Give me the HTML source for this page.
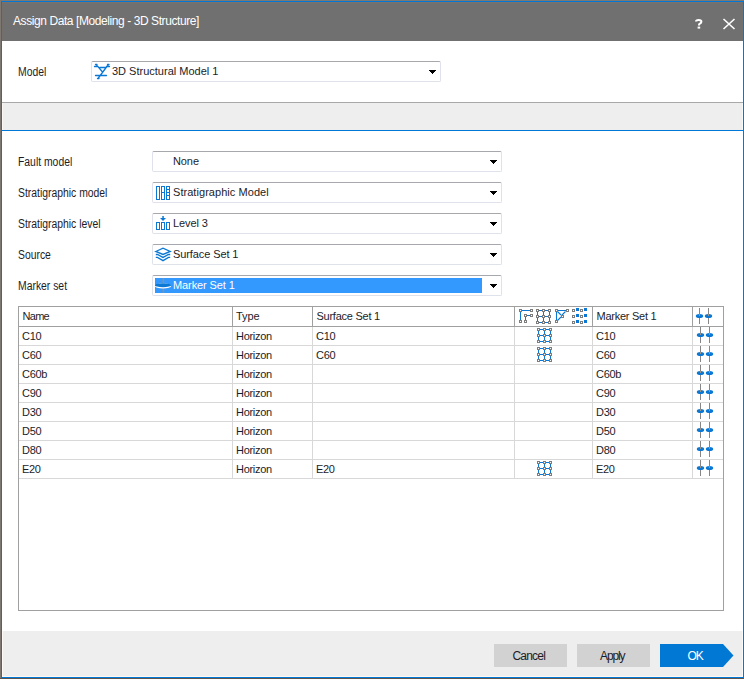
<!DOCTYPE html>
<html><head><meta charset="utf-8">
<style>
*{margin:0;padding:0;box-sizing:border-box}
html,body{width:744px;height:679px;overflow:hidden;background:#7e7873;font-family:"Liberation Sans",sans-serif;color:#1c1c28}
.a{position:absolute}
#win{position:absolute;left:1px;top:1px;width:743px;height:677px;border:1px solid #0078d7;background:#fff}
#title{left:1px;top:1px;width:741px;height:39px;background:#707070}
.t{position:absolute;white-space:nowrap;font-size:11px;line-height:13px}
.combo{position:absolute;height:21px;border:1px solid #dfe2ea;border-top-color:#a6a8ad;border-radius:2px;background:#fff}
.arr{position:absolute;width:0;height:0;border-left:4px solid transparent;border-right:4px solid transparent;border-top:4px solid #000}
.hl{position:absolute;height:1px}
.vl{position:absolute;width:1px}
.btn{position:absolute;top:644px;height:23px;background:#d2d2d2}
.lb{font-size:12px;transform-origin:0 0;transform:scaleX(0.865)}
.cb{letter-spacing:-0.1px}
.tb{letter-spacing:-0.3px}
</style></head><body>
<div id="win"></div>
<!-- title bar -->
<div class="a" style="left:2px;top:2px;width:741px;height:39px;background:#707070"></div>
<div class="t" style="left:13px;top:15px;color:#fff;font-size:12px;letter-spacing:-0.42px">Assign Data [Modeling - 3D Structure]</div>
<svg class="a" style="left:694px;top:18px" width="10" height="12" viewBox="0 0 10 12"><path d="M2 3.6 Q2 1.9 4.6 1.9 Q7.4 1.9 7.4 3.7 Q7.4 5.0 5.6 5.8 Q5 6.2 5 7 V7.6" stroke="#fff" stroke-width="2" fill="none"/><rect x="3.6" y="8.6" width="2.6" height="2" fill="#fff"/></svg>
<svg class="a" style="left:722px;top:18px" width="14" height="12" viewBox="0 0 14 12"><path d="M1.5 1 L12.5 11 M12.5 1 L1.5 11" stroke="#fff" stroke-width="1.6" fill="none"/></svg>

<!-- model row -->
<div class="t lb" style="left:18px;top:66px">Model</div>
<div class="combo" style="left:91px;top:61px;width:350px"></div>
<svg class="a" style="left:92px;top:61px" width="20" height="20"><g stroke="#0a78d4" stroke-width="1.3" fill="none" stroke-linecap="round"><path d="M2.5 5.5H6M3.5 3.5H5M4.5 3.8L10.5 11M14.5 5.5H17.5M15.5 3.5H17M16 4L6 17.5M7.8 6.5H13.5M3.5 14.5H14.5M5.5 17.5H7"/></g></svg>
<div class="t cb" style="left:112px;top:65px;letter-spacing:0px">3D Structural Model 1</div>
<svg class="a" style="left:429px;top:70px" width="7" height="4"><g shape-rendering="crispEdges"><rect x="0" y="0" width="7" height="1"/><rect x="1" y="1" width="5" height="1"/><rect x="2" y="2" width="3" height="1"/><rect x="3" y="3" width="1" height="1"/></g></svg>

<!-- band -->
<div class="hl" style="left:2px;top:102px;width:741px;background:#a8a8a8"></div>
<div class="a" style="left:2px;top:103px;width:741px;height:27px;background:#eeeeee"></div>
<div class="hl" style="left:2px;top:130px;width:741px;background:#0078d7"></div>

<!-- form -->
<div class="t lb" style="left:18px;top:156px">Fault model</div>
<div class="t lb" style="left:18px;top:187px">Stratigraphic model</div>
<div class="t lb" style="left:18px;top:218px">Stratigraphic level</div>
<div class="t lb" style="left:18px;top:249px">Source</div>
<div class="t lb" style="left:18px;top:280px">Marker set</div>

<div class="combo" style="left:152px;top:151px;width:350px"></div>
<div class="combo" style="left:152px;top:182px;width:350px"></div>
<div class="combo" style="left:152px;top:213px;width:350px"></div>
<div class="combo" style="left:152px;top:244px;width:350px"></div>
<div class="combo" style="left:152px;top:275px;width:350px"></div>
<svg class="a" style="left:490px;top:160px" width="7" height="4"><g shape-rendering="crispEdges"><rect x="0" y="0" width="7" height="1"/><rect x="1" y="1" width="5" height="1"/><rect x="2" y="2" width="3" height="1"/><rect x="3" y="3" width="1" height="1"/></g></svg>
<svg class="a" style="left:490px;top:191px" width="7" height="4"><g shape-rendering="crispEdges"><rect x="0" y="0" width="7" height="1"/><rect x="1" y="1" width="5" height="1"/><rect x="2" y="2" width="3" height="1"/><rect x="3" y="3" width="1" height="1"/></g></svg>
<svg class="a" style="left:490px;top:222px" width="7" height="4"><g shape-rendering="crispEdges"><rect x="0" y="0" width="7" height="1"/><rect x="1" y="1" width="5" height="1"/><rect x="2" y="2" width="3" height="1"/><rect x="3" y="3" width="1" height="1"/></g></svg>
<svg class="a" style="left:490px;top:253px" width="7" height="4"><g shape-rendering="crispEdges"><rect x="0" y="0" width="7" height="1"/><rect x="1" y="1" width="5" height="1"/><rect x="2" y="2" width="3" height="1"/><rect x="3" y="3" width="1" height="1"/></g></svg>
<svg class="a" style="left:490px;top:284px" width="7" height="4"><g shape-rendering="crispEdges"><rect x="0" y="0" width="7" height="1"/><rect x="1" y="1" width="5" height="1"/><rect x="2" y="2" width="3" height="1"/><rect x="3" y="3" width="1" height="1"/></g></svg>

<div class="t cb" style="left:173px;top:155px">None</div>
<svg class="a" style="left:153px;top:181px" width="20" height="20" shape-rendering="crispEdges"><g fill="none" stroke="#0a78d4" stroke-width="1"><rect x="3.5" y="5.5" width="3" height="13"/><rect x="8.5" y="5.5" width="3" height="13"/><rect x="13.5" y="5.5" width="3" height="13"/><path d="M8 11.5H12M13 8.5H17M13 11.5H17M13 14.5H17"/></g></svg>
<div class="t cb" style="left:173px;top:186px;letter-spacing:0.05px">Stratigraphic Model</div>
<svg class="a" style="left:153px;top:212px" width="20" height="20"><g fill="none" stroke="#0a78d4" stroke-width="1" shape-rendering="crispEdges"><rect x="3.5" y="10.5" width="3" height="7"/><rect x="8.5" y="10.5" width="3" height="7"/><rect x="13.5" y="10.5" width="3" height="7"/></g><rect x="9.3" y="4" width="1.5" height="3" fill="#0a78d4"/><path d="M7 6H13L10 9Z" fill="#0a78d4"/></svg>
<div class="t cb" style="left:173px;top:217px">Level 3</div>
<svg class="a" style="left:153px;top:243px" width="20" height="20"><g fill="none" stroke="#0a78d4" stroke-width="1.35"><path d="M2.8 8.5L10 5.2L17.2 8.5L10 11.4Z"/><path d="M2.8 11.5H4.5L10 14.4L15.5 11.5H17.2"/><path d="M2.8 14.4H4.5L10 17.6L15.5 14.4H17.2"/></g></svg>
<div class="t cb" style="left:173px;top:248px">Surface Set 1</div>
<div class="a" style="left:155px;top:278px;width:327px;height:15px;background:#3399ff"></div>
<svg class="a" style="left:155px;top:278px" width="17" height="15"><rect x="7.6" y="0" width="1.5" height="15" fill="#8f8f8f"/><ellipse cx="8" cy="7.9" rx="8.2" ry="2.6" fill="#fff"/><ellipse cx="8" cy="7.2" rx="8.2" ry="2" fill="#0a78d4"/></svg>
<div class="t cb" style="left:173px;top:279px;color:#fff">Marker Set 1</div>

<!-- table -->
<div class="a" style="left:18px;top:306px;width:706px;height:305px;border:1px solid #a0a0a0;background:#fff"></div>
<div class="hl" style="left:19px;top:326px;width:704px;background:#a0a0a0"></div>
<div class="vl" style="left:232px;top:307px;height:19px;background:#a0a0a0"></div>
<div class="vl" style="left:232px;top:327px;height:152px;background:#d8d8d8"></div>
<div class="vl" style="left:312px;top:307px;height:19px;background:#a0a0a0"></div>
<div class="vl" style="left:312px;top:327px;height:152px;background:#d8d8d8"></div>
<div class="vl" style="left:514px;top:307px;height:19px;background:#a0a0a0"></div>
<div class="vl" style="left:514px;top:327px;height:152px;background:#d8d8d8"></div>
<div class="vl" style="left:592px;top:307px;height:19px;background:#a0a0a0"></div>
<div class="vl" style="left:592px;top:327px;height:152px;background:#d8d8d8"></div>
<div class="vl" style="left:692px;top:307px;height:19px;background:#a0a0a0"></div>
<div class="vl" style="left:692px;top:327px;height:152px;background:#d8d8d8"></div>
<div class="hl" style="left:19px;top:345px;width:704px;background:#d8d8d8"></div>
<div class="hl" style="left:19px;top:364px;width:704px;background:#d8d8d8"></div>
<div class="hl" style="left:19px;top:383px;width:704px;background:#d8d8d8"></div>
<div class="hl" style="left:19px;top:402px;width:704px;background:#d8d8d8"></div>
<div class="hl" style="left:19px;top:421px;width:704px;background:#d8d8d8"></div>
<div class="hl" style="left:19px;top:440px;width:704px;background:#d8d8d8"></div>
<div class="hl" style="left:19px;top:459px;width:704px;background:#d8d8d8"></div>
<div class="hl" style="left:19px;top:478px;width:704px;background:#d8d8d8"></div>
<div class="t tb" style="left:22.5px;top:310px;letter-spacing:-0.7px">Name</div>
<div class="t tb" style="left:236px;top:310px;letter-spacing:-0.1px">Type</div>
<div class="t tb" style="left:316.5px;top:310px;letter-spacing:-0.25px">Surface Set 1</div>
<div class="t tb" style="left:596.5px;top:310px;letter-spacing:-0.25px">Marker Set 1</div>
<div class="t tb" style="left:22px;top:330px">C10</div>
<div class="t tb" style="left:236px;top:330px">Horizon</div>
<div class="t tb" style="left:316px;top:330px">C10</div>
<div class="t tb" style="left:596px;top:330px">C10</div>
<svg class="a" style="left:537px;top:328px" width="15" height="15"><g shape-rendering="crispEdges">
<g fill="#0a78d4"><rect x="3" y="1" width="3" height="1"/><rect x="9" y="1" width="3" height="1"/><rect x="3" y="7" width="3" height="1"/><rect x="9" y="7" width="3" height="1"/><rect x="3" y="13" width="3" height="1"/><rect x="9" y="13" width="3" height="1"/>
<rect x="1" y="3" width="1" height="3"/><rect x="1" y="9" width="1" height="3"/><rect x="7" y="3" width="1" height="3"/><rect x="7" y="9" width="1" height="3"/><rect x="13" y="3" width="1" height="3"/><rect x="13" y="9" width="1" height="3"/></g>
<g transform="translate(0,0)"><rect x="0.5" y="0.5" width="2" height="2" fill="#fff" stroke="#7d7d7d" stroke-width="1"/></g><g transform="translate(6,0)"><rect x="0.5" y="0.5" width="2" height="2" fill="#fff" stroke="#7d7d7d" stroke-width="1"/></g><g transform="translate(12,0)"><rect x="0.5" y="0.5" width="2" height="2" fill="#fff" stroke="#7d7d7d" stroke-width="1"/></g>
<g transform="translate(0,6)"><rect x="0.5" y="0.5" width="2" height="2" fill="#fff" stroke="#7d7d7d" stroke-width="1"/></g><g transform="translate(6,6)"><rect x="0.5" y="0.5" width="2" height="2" fill="#fff" stroke="#7d7d7d" stroke-width="1"/></g><g transform="translate(12,6)"><rect x="0.5" y="0.5" width="2" height="2" fill="#fff" stroke="#7d7d7d" stroke-width="1"/></g>
<g transform="translate(0,12)"><rect x="0.5" y="0.5" width="2" height="2" fill="#fff" stroke="#7d7d7d" stroke-width="1"/></g><g transform="translate(6,12)"><rect x="0.5" y="0.5" width="2" height="2" fill="#fff" stroke="#7d7d7d" stroke-width="1"/></g><g transform="translate(12,12)"><rect x="0.5" y="0.5" width="2" height="2" fill="#fff" stroke="#7d7d7d" stroke-width="1"/></g>
</g></svg>
<svg class="a" style="left:696px;top:327px" width="18" height="18">
<rect x="4" y="0" width="1" height="16" fill="#868686" shape-rendering="crispEdges"/><rect x="13" y="0" width="1" height="16" fill="#868686" shape-rendering="crispEdges"/>
<ellipse cx="4.5" cy="8" rx="3.7" ry="2.1" fill="#0a78d4"/><ellipse cx="13.5" cy="8" rx="3.7" ry="2.1" fill="#0a78d4"/>
<rect x="4" y="6" width="1" height="2" fill="#a09080" shape-rendering="crispEdges"/><rect x="13" y="6" width="1" height="2" fill="#a09080" shape-rendering="crispEdges"/>
</svg>
<div class="t tb" style="left:22px;top:349px">C60</div>
<div class="t tb" style="left:236px;top:349px">Horizon</div>
<div class="t tb" style="left:316px;top:349px">C60</div>
<div class="t tb" style="left:596px;top:349px">C60</div>
<svg class="a" style="left:537px;top:347px" width="15" height="15"><g shape-rendering="crispEdges">
<g fill="#0a78d4"><rect x="3" y="1" width="3" height="1"/><rect x="9" y="1" width="3" height="1"/><rect x="3" y="7" width="3" height="1"/><rect x="9" y="7" width="3" height="1"/><rect x="3" y="13" width="3" height="1"/><rect x="9" y="13" width="3" height="1"/>
<rect x="1" y="3" width="1" height="3"/><rect x="1" y="9" width="1" height="3"/><rect x="7" y="3" width="1" height="3"/><rect x="7" y="9" width="1" height="3"/><rect x="13" y="3" width="1" height="3"/><rect x="13" y="9" width="1" height="3"/></g>
<g transform="translate(0,0)"><rect x="0.5" y="0.5" width="2" height="2" fill="#fff" stroke="#7d7d7d" stroke-width="1"/></g><g transform="translate(6,0)"><rect x="0.5" y="0.5" width="2" height="2" fill="#fff" stroke="#7d7d7d" stroke-width="1"/></g><g transform="translate(12,0)"><rect x="0.5" y="0.5" width="2" height="2" fill="#fff" stroke="#7d7d7d" stroke-width="1"/></g>
<g transform="translate(0,6)"><rect x="0.5" y="0.5" width="2" height="2" fill="#fff" stroke="#7d7d7d" stroke-width="1"/></g><g transform="translate(6,6)"><rect x="0.5" y="0.5" width="2" height="2" fill="#fff" stroke="#7d7d7d" stroke-width="1"/></g><g transform="translate(12,6)"><rect x="0.5" y="0.5" width="2" height="2" fill="#fff" stroke="#7d7d7d" stroke-width="1"/></g>
<g transform="translate(0,12)"><rect x="0.5" y="0.5" width="2" height="2" fill="#fff" stroke="#7d7d7d" stroke-width="1"/></g><g transform="translate(6,12)"><rect x="0.5" y="0.5" width="2" height="2" fill="#fff" stroke="#7d7d7d" stroke-width="1"/></g><g transform="translate(12,12)"><rect x="0.5" y="0.5" width="2" height="2" fill="#fff" stroke="#7d7d7d" stroke-width="1"/></g>
</g></svg>
<svg class="a" style="left:696px;top:346px" width="18" height="18">
<rect x="4" y="0" width="1" height="16" fill="#868686" shape-rendering="crispEdges"/><rect x="13" y="0" width="1" height="16" fill="#868686" shape-rendering="crispEdges"/>
<ellipse cx="4.5" cy="8" rx="3.7" ry="2.1" fill="#0a78d4"/><ellipse cx="13.5" cy="8" rx="3.7" ry="2.1" fill="#0a78d4"/>
<rect x="4" y="6" width="1" height="2" fill="#a09080" shape-rendering="crispEdges"/><rect x="13" y="6" width="1" height="2" fill="#a09080" shape-rendering="crispEdges"/>
</svg>
<div class="t tb" style="left:22px;top:368px">C60b</div>
<div class="t tb" style="left:236px;top:368px">Horizon</div>
<div class="t tb" style="left:596px;top:368px">C60b</div>
<svg class="a" style="left:696px;top:365px" width="18" height="18">
<rect x="4" y="0" width="1" height="16" fill="#868686" shape-rendering="crispEdges"/><rect x="13" y="0" width="1" height="16" fill="#868686" shape-rendering="crispEdges"/>
<ellipse cx="4.5" cy="8" rx="3.7" ry="2.1" fill="#0a78d4"/><ellipse cx="13.5" cy="8" rx="3.7" ry="2.1" fill="#0a78d4"/>
<rect x="4" y="6" width="1" height="2" fill="#a09080" shape-rendering="crispEdges"/><rect x="13" y="6" width="1" height="2" fill="#a09080" shape-rendering="crispEdges"/>
</svg>
<div class="t tb" style="left:22px;top:387px">C90</div>
<div class="t tb" style="left:236px;top:387px">Horizon</div>
<div class="t tb" style="left:596px;top:387px">C90</div>
<svg class="a" style="left:696px;top:384px" width="18" height="18">
<rect x="4" y="0" width="1" height="16" fill="#868686" shape-rendering="crispEdges"/><rect x="13" y="0" width="1" height="16" fill="#868686" shape-rendering="crispEdges"/>
<ellipse cx="4.5" cy="8" rx="3.7" ry="2.1" fill="#0a78d4"/><ellipse cx="13.5" cy="8" rx="3.7" ry="2.1" fill="#0a78d4"/>
<rect x="4" y="6" width="1" height="2" fill="#a09080" shape-rendering="crispEdges"/><rect x="13" y="6" width="1" height="2" fill="#a09080" shape-rendering="crispEdges"/>
</svg>
<div class="t tb" style="left:22px;top:406px">D30</div>
<div class="t tb" style="left:236px;top:406px">Horizon</div>
<div class="t tb" style="left:596px;top:406px">D30</div>
<svg class="a" style="left:696px;top:403px" width="18" height="18">
<rect x="4" y="0" width="1" height="16" fill="#868686" shape-rendering="crispEdges"/><rect x="13" y="0" width="1" height="16" fill="#868686" shape-rendering="crispEdges"/>
<ellipse cx="4.5" cy="8" rx="3.7" ry="2.1" fill="#0a78d4"/><ellipse cx="13.5" cy="8" rx="3.7" ry="2.1" fill="#0a78d4"/>
<rect x="4" y="6" width="1" height="2" fill="#a09080" shape-rendering="crispEdges"/><rect x="13" y="6" width="1" height="2" fill="#a09080" shape-rendering="crispEdges"/>
</svg>
<div class="t tb" style="left:22px;top:425px">D50</div>
<div class="t tb" style="left:236px;top:425px">Horizon</div>
<div class="t tb" style="left:596px;top:425px">D50</div>
<svg class="a" style="left:696px;top:422px" width="18" height="18">
<rect x="4" y="0" width="1" height="16" fill="#868686" shape-rendering="crispEdges"/><rect x="13" y="0" width="1" height="16" fill="#868686" shape-rendering="crispEdges"/>
<ellipse cx="4.5" cy="8" rx="3.7" ry="2.1" fill="#0a78d4"/><ellipse cx="13.5" cy="8" rx="3.7" ry="2.1" fill="#0a78d4"/>
<rect x="4" y="6" width="1" height="2" fill="#a09080" shape-rendering="crispEdges"/><rect x="13" y="6" width="1" height="2" fill="#a09080" shape-rendering="crispEdges"/>
</svg>
<div class="t tb" style="left:22px;top:444px">D80</div>
<div class="t tb" style="left:236px;top:444px">Horizon</div>
<div class="t tb" style="left:596px;top:444px">D80</div>
<svg class="a" style="left:696px;top:441px" width="18" height="18">
<rect x="4" y="0" width="1" height="16" fill="#868686" shape-rendering="crispEdges"/><rect x="13" y="0" width="1" height="16" fill="#868686" shape-rendering="crispEdges"/>
<ellipse cx="4.5" cy="8" rx="3.7" ry="2.1" fill="#0a78d4"/><ellipse cx="13.5" cy="8" rx="3.7" ry="2.1" fill="#0a78d4"/>
<rect x="4" y="6" width="1" height="2" fill="#a09080" shape-rendering="crispEdges"/><rect x="13" y="6" width="1" height="2" fill="#a09080" shape-rendering="crispEdges"/>
</svg>
<div class="t tb" style="left:22px;top:463px">E20</div>
<div class="t tb" style="left:236px;top:463px">Horizon</div>
<div class="t tb" style="left:316px;top:463px">E20</div>
<div class="t tb" style="left:596px;top:463px">E20</div>
<svg class="a" style="left:537px;top:461px" width="15" height="15"><g shape-rendering="crispEdges">
<g fill="#0a78d4"><rect x="3" y="1" width="3" height="1"/><rect x="9" y="1" width="3" height="1"/><rect x="3" y="7" width="3" height="1"/><rect x="9" y="7" width="3" height="1"/><rect x="3" y="13" width="3" height="1"/><rect x="9" y="13" width="3" height="1"/>
<rect x="1" y="3" width="1" height="3"/><rect x="1" y="9" width="1" height="3"/><rect x="7" y="3" width="1" height="3"/><rect x="7" y="9" width="1" height="3"/><rect x="13" y="3" width="1" height="3"/><rect x="13" y="9" width="1" height="3"/></g>
<g transform="translate(0,0)"><rect x="0.5" y="0.5" width="2" height="2" fill="#fff" stroke="#7d7d7d" stroke-width="1"/></g><g transform="translate(6,0)"><rect x="0.5" y="0.5" width="2" height="2" fill="#fff" stroke="#7d7d7d" stroke-width="1"/></g><g transform="translate(12,0)"><rect x="0.5" y="0.5" width="2" height="2" fill="#fff" stroke="#7d7d7d" stroke-width="1"/></g>
<g transform="translate(0,6)"><rect x="0.5" y="0.5" width="2" height="2" fill="#fff" stroke="#7d7d7d" stroke-width="1"/></g><g transform="translate(6,6)"><rect x="0.5" y="0.5" width="2" height="2" fill="#fff" stroke="#7d7d7d" stroke-width="1"/></g><g transform="translate(12,6)"><rect x="0.5" y="0.5" width="2" height="2" fill="#fff" stroke="#7d7d7d" stroke-width="1"/></g>
<g transform="translate(0,12)"><rect x="0.5" y="0.5" width="2" height="2" fill="#fff" stroke="#7d7d7d" stroke-width="1"/></g><g transform="translate(6,12)"><rect x="0.5" y="0.5" width="2" height="2" fill="#fff" stroke="#7d7d7d" stroke-width="1"/></g><g transform="translate(12,12)"><rect x="0.5" y="0.5" width="2" height="2" fill="#fff" stroke="#7d7d7d" stroke-width="1"/></g>
</g></svg>
<svg class="a" style="left:696px;top:460px" width="18" height="18">
<rect x="4" y="0" width="1" height="16" fill="#868686" shape-rendering="crispEdges"/><rect x="13" y="0" width="1" height="16" fill="#868686" shape-rendering="crispEdges"/>
<ellipse cx="4.5" cy="8" rx="3.7" ry="2.1" fill="#0a78d4"/><ellipse cx="13.5" cy="8" rx="3.7" ry="2.1" fill="#0a78d4"/>
<rect x="4" y="6" width="1" height="2" fill="#a09080" shape-rendering="crispEdges"/><rect x="13" y="6" width="1" height="2" fill="#a09080" shape-rendering="crispEdges"/>
</svg>
<svg class="a" style="left:519px;top:309px" width="15" height="15" shape-rendering="crispEdges"><g fill="#0a78d4"><rect x="3" y="1" width="8" height="1"/><rect x="1" y="3" width="1" height="8"/><rect x="8" y="6" width="3" height="1"/><rect x="6" y="8" width="1" height="3"/></g><g transform="translate(0,0)"><rect x="0.5" y="0.5" width="2" height="2" fill="#fff" stroke="#7d7d7d" stroke-width="1"/></g><g transform="translate(11,0)"><rect x="0.5" y="0.5" width="2" height="2" fill="#fff" stroke="#7d7d7d" stroke-width="1"/></g><g transform="translate(5,5)"><rect x="0.5" y="0.5" width="2" height="2" fill="#fff" stroke="#7d7d7d" stroke-width="1"/></g><g transform="translate(11,5)"><rect x="0.5" y="0.5" width="2" height="2" fill="#fff" stroke="#7d7d7d" stroke-width="1"/></g><g transform="translate(0,11)"><rect x="0.5" y="0.5" width="2" height="2" fill="#fff" stroke="#7d7d7d" stroke-width="1"/></g><g transform="translate(5,11)"><rect x="0.5" y="0.5" width="2" height="2" fill="#fff" stroke="#7d7d7d" stroke-width="1"/></g></svg>
<svg class="a" style="left:536px;top:309px" width="15" height="15"><g shape-rendering="crispEdges">
<g fill="#0a78d4"><rect x="3" y="1" width="3" height="1"/><rect x="9" y="1" width="3" height="1"/><rect x="3" y="7" width="3" height="1"/><rect x="9" y="7" width="3" height="1"/><rect x="3" y="13" width="3" height="1"/><rect x="9" y="13" width="3" height="1"/>
<rect x="1" y="3" width="1" height="3"/><rect x="1" y="9" width="1" height="3"/><rect x="7" y="3" width="1" height="3"/><rect x="7" y="9" width="1" height="3"/><rect x="13" y="3" width="1" height="3"/><rect x="13" y="9" width="1" height="3"/></g>
<g transform="translate(0,0)"><rect x="0.5" y="0.5" width="2" height="2" fill="#fff" stroke="#7d7d7d" stroke-width="1"/></g><g transform="translate(6,0)"><rect x="0.5" y="0.5" width="2" height="2" fill="#fff" stroke="#7d7d7d" stroke-width="1"/></g><g transform="translate(12,0)"><rect x="0.5" y="0.5" width="2" height="2" fill="#fff" stroke="#7d7d7d" stroke-width="1"/></g>
<g transform="translate(0,6)"><rect x="0.5" y="0.5" width="2" height="2" fill="#fff" stroke="#7d7d7d" stroke-width="1"/></g><g transform="translate(6,6)"><rect x="0.5" y="0.5" width="2" height="2" fill="#fff" stroke="#7d7d7d" stroke-width="1"/></g><g transform="translate(12,6)"><rect x="0.5" y="0.5" width="2" height="2" fill="#fff" stroke="#7d7d7d" stroke-width="1"/></g>
<g transform="translate(0,12)"><rect x="0.5" y="0.5" width="2" height="2" fill="#fff" stroke="#7d7d7d" stroke-width="1"/></g><g transform="translate(6,12)"><rect x="0.5" y="0.5" width="2" height="2" fill="#fff" stroke="#7d7d7d" stroke-width="1"/></g><g transform="translate(12,12)"><rect x="0.5" y="0.5" width="2" height="2" fill="#fff" stroke="#7d7d7d" stroke-width="1"/></g>
</g></svg>
<svg class="a" style="left:555px;top:309px" width="15" height="15"><g stroke="#0a78d4" stroke-width="1.1" fill="none"><path d="M3 1.5H11M1.5 3V11M2.5 2.5L6 6M10.5 2.5L7 6M2.5 11.5L6 8"/></g><g shape-rendering="crispEdges"><g transform="translate(0,0)"><rect x="0.5" y="0.5" width="2" height="2" fill="#fff" stroke="#7d7d7d" stroke-width="1"/></g><g transform="translate(11,0)"><rect x="0.5" y="0.5" width="2" height="2" fill="#fff" stroke="#7d7d7d" stroke-width="1"/></g><g transform="translate(6,6)"><rect x="0.5" y="0.5" width="2" height="2" fill="#fff" stroke="#7d7d7d" stroke-width="1"/></g><g transform="translate(0,11)"><rect x="0.5" y="0.5" width="2" height="2" fill="#fff" stroke="#7d7d7d" stroke-width="1"/></g></g></svg>
<svg class="a" style="left:572px;top:308px" width="15" height="16" shape-rendering="crispEdges"><g fill="#0a78d4"><rect x="4" y="0" width="3" height="3"/><rect x="12" y="0" width="3" height="3"/><rect x="4" y="6" width="3" height="3"/><rect x="12" y="6" width="3" height="3"/><rect x="4" y="12" width="3" height="3"/><rect x="12" y="12" width="3" height="3"/></g><g transform="translate(0,1)"><rect x="0.5" y="0.5" width="2" height="2" fill="#fff" stroke="#7d7d7d" stroke-width="1"/></g><g transform="translate(8,1)"><rect x="0.5" y="0.5" width="2" height="2" fill="#fff" stroke="#7d7d7d" stroke-width="1"/></g><g transform="translate(0,7)"><rect x="0.5" y="0.5" width="2" height="2" fill="#fff" stroke="#7d7d7d" stroke-width="1"/></g><g transform="translate(8,7)"><rect x="0.5" y="0.5" width="2" height="2" fill="#fff" stroke="#7d7d7d" stroke-width="1"/></g><g transform="translate(0,13)"><rect x="0.5" y="0.5" width="2" height="2" fill="#fff" stroke="#7d7d7d" stroke-width="1"/></g><g transform="translate(8,13)"><rect x="0.5" y="0.5" width="2" height="2" fill="#fff" stroke="#7d7d7d" stroke-width="1"/></g></svg>
<svg class="a" style="left:695px;top:308px" width="18" height="18">
<rect x="4" y="0" width="1" height="16" fill="#868686" shape-rendering="crispEdges"/><rect x="13" y="0" width="1" height="16" fill="#868686" shape-rendering="crispEdges"/>
<ellipse cx="4.5" cy="8" rx="3.7" ry="2.1" fill="#0a78d4"/><ellipse cx="13.5" cy="8" rx="3.7" ry="2.1" fill="#0a78d4"/>
<rect x="4" y="6" width="1" height="2" fill="#a09080" shape-rendering="crispEdges"/><rect x="13" y="6" width="1" height="2" fill="#a09080" shape-rendering="crispEdges"/>
</svg>

<!-- footer -->
<div class="a" style="left:2px;top:631px;width:741px;height:46px;background:#eeeeee"></div>
<div class="btn" style="left:494px;width:73px"></div>
<div class="btn" style="left:577px;width:73px"></div>
<svg class="a" style="left:660px;top:644px" width="74" height="23" viewBox="0 0 74 23"><path d="M0 0 H63 L73.5 11.5 L63 23 H0 Z" fill="#0078d4"/></svg>
<div class="t" style="left:512.5px;top:650px;font-size:12px;letter-spacing:-0.8px">Cancel</div>
<div class="t" style="left:600px;top:650px;font-size:12px;letter-spacing:-1.1px">Apply</div>
<div class="t" style="left:687.5px;top:650px;font-size:12px;color:#fff;letter-spacing:-1px">OK</div>
<!-- inner edges -->
<div class="a" style="left:2px;top:2px;width:741px;height:1px;background:#7a736d"></div>
<div class="vl" style="left:2px;top:3px;height:38px;background:#75706c"></div>
<div class="vl" style="left:742px;top:3px;height:38px;background:#75706c"></div>
<div class="vl" style="left:2px;top:103px;height:27px;background:#fbf7f2"></div>
<div class="vl" style="left:742px;top:103px;height:27px;background:#fbf7f2"></div>
<div class="vl" style="left:2px;top:631px;height:46px;background:#fdf8f3"></div>
<div class="vl" style="left:742px;top:631px;height:46px;background:#fdf8f3"></div>
<div class="hl" style="left:2px;top:676px;width:741px;background:#fdf8f3"></div>
<div class="hl" style="left:0px;top:678px;width:744px;background:#5e544e"></div>
</body></html>
